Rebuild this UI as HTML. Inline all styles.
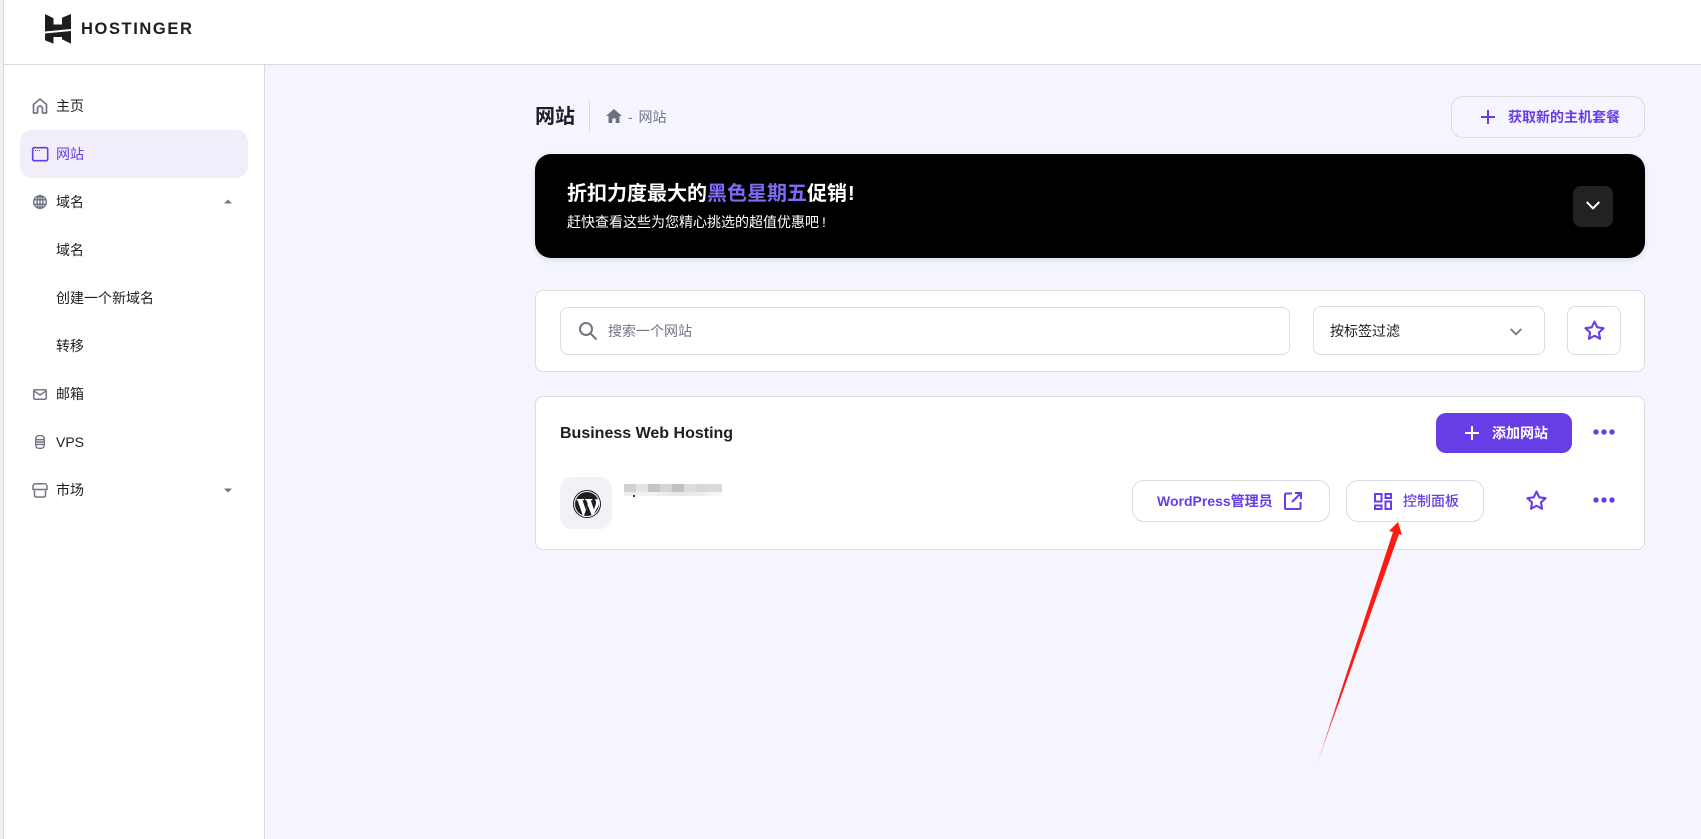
<!DOCTYPE html>
<html lang="zh"><head><meta charset="utf-8"><title>Hostinger</title>
<style>
*{box-sizing:border-box;margin:0;padding:0}
html,body{width:1701px;height:839px;overflow:hidden;background:#f4f5ff;font-family:"Liberation Sans","Noto Sans CJK SC",sans-serif;color:#1d1e20}
.a{position:absolute}
.t{position:absolute;white-space:nowrap;font-size:14px;line-height:20px}
.strip{left:0;top:0;width:4px;height:839px;background:#f1f1f1;border-right:1px solid #dcdcdc}
.head{left:4px;top:0;width:1697px;height:65px;background:#fff;border-bottom:1px solid #d8dae0}
.side{left:4px;top:65px;width:261px;height:774px;background:#fff;border-right:1px solid #d8dae0}
.active{left:20px;top:130px;width:228px;height:48px;border-radius:12px;background:#f1edfb}
.box{position:absolute;background:#fff;border:1px solid #dadce0}
.btn{position:absolute;border:1px solid #dadce0;border-radius:12px}
.p{color:#673de6;font-weight:700}
svg{position:absolute;overflow:visible}
</style></head><body>
<div class="a strip"></div><div class="a head"></div><div class="a side"></div><div class="a active"></div>

<svg style="left:0;top:0" width="100" height="60" fill="#1d1e20">
<polygon points="45,14 53.5,18.3 53.5,24.5 62,24.5 62,17.8 71,14 71,29 45,31.5"/>
<polygon points="45,33.5 71,31 71,43.7 62,39.3 62,37 53.5,37 53.5,43.7 45,40.300"/>
</svg>
<div class="t" style="left:81px;top:18px;font-size:16.5px;line-height:22px;font-weight:700;letter-spacing:1.6px;color:#1d1e20">HOSTINGER</div>

<svg style="left:32px;top:98px" width="16" height="16" fill="none" stroke="#727586" stroke-width="1.700" stroke-linejoin="round"><path d="M1.500 15V6.500L8 1l6.500 5.500V15h-4v-4.500a2.500 2.500 0 0 0-5 0V15z"/></svg>
<svg style="left:32px;top:147px" width="16" height="15" fill="none" stroke="#673de6" stroke-width="1.600"><rect x=".7" y=".7" width="15" height="13" rx="1.500"/><path d="M3 3.500h1M5 3.500h1M7 3.500h1" stroke-width="1"/></svg>
<svg style="left:33px;top:195px" width="14" height="14" fill="none" stroke="#727586" stroke-width="1.500"><circle cx="7" cy="7" r="6.300"/><ellipse cx="7" cy="7" rx="3" ry="6.300"/><path d="M.7 4.700h12.600M.7 9.300h12.600M7 .7v12.600"/></svg>
<svg style="left:33px;top:389px" width="14" height="11" fill="none" stroke="#727586" stroke-width="1.500"><rect x=".7" y=".7" width="12.600" height="9.600" rx="1.300"/><path d="M1 2l6 4 6-4"/></svg>
<svg style="left:35px;top:435px" width="10" height="14" fill="none" stroke="#727586" stroke-width="1.400"><rect x=".7" y=".7" width="8.600" height="12.600" rx="3"/><path d="M.7 4.700h8.600M.7 7h8.600M.7 9.400h8.600"/></svg>
<svg style="left:32px;top:483px" width="16" height="15" fill="none" stroke="#727586" stroke-width="1.500"><path d="M2.500 7.500V12.500a1.500 1.500 0 0 0 1.500 1.500h8a1.500 1.500 0 0 0 1.500-1.500V7.500"/><path d="M3.500 .8h9a2.500 2.500 0 0 1 2.500 2.500V6.500H1V3.300A2.500 2.500 0 0 1 3.500 .8z"/></svg>

<div class="t" style="left:56px;top:96px">主页</div>
<div class="t" style="left:56px;top:144px;color:#673de6">网站</div>
<div class="t" style="left:56px;top:192px">域名</div>
<div class="t" style="left:56px;top:240px">域名</div>
<div class="t" style="left:56px;top:288px">创建一个新域名</div>
<div class="t" style="left:56px;top:336px">转移</div>
<div class="t" style="left:56px;top:384px">邮箱</div>
<div class="t" style="left:56px;top:432px">VPS</div>
<div class="t" style="left:56px;top:480px">市场</div>
<svg style="left:224px;top:199px" width="8" height="5" fill="#727586"><path d="M0 4.500L4 .5l4 4z"/></svg>
<svg style="left:224px;top:488px" width="8" height="5" fill="#727586"><path d="M0 .5h8l-4 4z"/></svg>

<div class="t" style="left:535px;top:103px;font-size:20px;line-height:28px;font-weight:700">网站</div>
<div class="a" style="left:589px;top:101px;width:1px;height:32px;background:#d8dae0"></div>
<svg style="left:606px;top:109px" width="16" height="14" fill="#6d7081"><path d="M8 0L0 7h2.500v7h3.800V9.500h3.400V14h3.800V7H16z"/></svg>
<div class="t" style="left:628px;top:107px;color:#727586;word-spacing:2px">- 网站</div>

<div class="btn" style="left:1451px;top:96px;width:194px;height:42px"></div>
<svg style="left:1481px;top:110px" width="14" height="14" stroke="#673de6" stroke-width="2"><path d="M7 0v14M0 7h14"/></svg>
<div class="t p" style="left:1508px;top:107px">获取新的主机套餐</div>

<div class="a" style="left:535px;top:154px;width:1110px;height:104px;background:#000;border-radius:16px;box-shadow:0 2px 6px rgba(30,30,80,.12)"></div>
<div class="t" style="left:567px;top:180px;font-size:20px;line-height:28px;font-weight:700;color:#fff">折扣力度最大的<span style="color:#7c6cf5">黑色星期五</span>促销<span style="margin-left:1px">!</span></div>
<div class="t" style="left:567px;top:212px;color:#fff">赶快查看这些为您精心挑选的超值优惠吧<span style="margin-left:3px">!</span></div>
<div class="a" style="left:1573px;top:186px;width:40px;height:41px;border-radius:8px;background:#212224"></div>
<svg style="left:1586px;top:201px" width="14" height="9" fill="none" stroke="#fff" stroke-width="2"><path d="M.7 1l6.300 6.300L13.300 1"/></svg>

<div class="box" style="left:535px;top:290px;width:1110px;height:82px;border-radius:8px"></div>
<div class="box" style="left:560px;top:307px;width:730px;height:48px;border-radius:8px"></div>
<svg style="left:579px;top:322px" width="18" height="18" fill="none" stroke="#727586" stroke-width="2"><circle cx="7" cy="7" r="6"/><path d="M11.500 11.500L17.500 17.500"/></svg>
<div class="t" style="left:608px;top:321px;color:#727586">搜索一个网站</div>
<div class="box" style="left:1313px;top:306px;width:232px;height:49px;border-radius:8px"></div>
<div class="t" style="left:1330px;top:321px">按标签过滤</div>
<svg style="left:1510px;top:328px" width="12" height="8" fill="none" stroke="#727586" stroke-width="1.800"><path d="M.7 1l5.300 5.300L11.300 1"/></svg>
<div class="box" style="left:1567px;top:306px;width:54px;height:49px;border-radius:8px"></div>
<svg style="left:1583.500px;top:319.500px" width="21" height="21" viewBox="0 0 20 20" fill="none" stroke="#673de6" stroke-width="2" stroke-linejoin="round"><path d="M10 1.500l2.600 5.500 6 .8-4.400 4.100 1.100 6L10 15l-5.300 2.900 1.100-6L1.400 7.800l6-.8z"/></svg>

<div class="box" style="left:535px;top:396px;width:1110px;height:154px;border-radius:8px"></div>
<div class="t" style="left:560px;top:423px;font-size:16px;line-height:22px;font-weight:700">Business Web Hosting</div>
<div class="a" style="left:1436px;top:413px;width:136px;height:40px;border-radius:10px;background:#673de6"></div>
<svg style="left:1465px;top:426px" width="14" height="14" stroke="#fff" stroke-width="2"><path d="M7 0v14M0 7h14"/></svg>
<div class="t" style="left:1492px;top:423px;color:#fff;font-weight:700">添加网站</div>
<svg style="left:1593px;top:429px" width="22" height="6" fill="#673de6"><circle cx="3" cy="3" r="2.700"/><circle cx="11" cy="3" r="2.700"/><circle cx="19" cy="3" r="2.700"/></svg>

<div class="a" style="left:560px;top:477px;width:52px;height:52px;border-radius:12px;background:#f1f2f6"></div>
<svg style="left:573px;top:490px" width="28" height="28" viewBox="0 0 28 28"><circle cx="14" cy="14" r="13.500" fill="#fff" stroke="#1d1e20" stroke-width="1"/><circle cx="14" cy="14" r="12" fill="#1d1e20"/><path d="M3.500 9h7.500v1.200l-1.500.2 3.300 9.500 2-5.800-1.300-3.700-1.200-.2V9h7v1.200l-1.500.2 3.200 9.300 1.800-5.700c.7-2.200-.2-3.300-1-4.800h3.300c.9 2 1.200 3.800.3 6.500L20 25.500h-1.200L14.700 15l-3.700 10.500H9.800L4.600 10.400 3.500 10.200z" fill="#fff"/></svg>

<div class="a" style="left:624px;top:484px;width:12px;height:8px;background:#d3d2d0"></div>
<div class="a" style="left:636px;top:484px;width:12px;height:8px;background:#e2e3e5"></div>
<div class="a" style="left:648px;top:484px;width:12px;height:8px;background:#c6c5c4"></div>
<div class="a" style="left:660px;top:484px;width:12px;height:8px;background:#d4d5d5"></div>
<div class="a" style="left:672px;top:484px;width:12px;height:8px;background:#c2c1c1"></div>
<div class="a" style="left:684px;top:484px;width:12px;height:8px;background:#dcdde0"></div>
<div class="a" style="left:696px;top:484px;width:12px;height:8px;background:#d9d6d6"></div>
<div class="a" style="left:708px;top:484px;width:14px;height:8px;background:#d9dadd"></div>
<div class="a" style="left:624px;top:492px;width:98px;height:4px;background:linear-gradient(90deg,#eceded,#f3f3f3 30%,#e6e6e6 50%,#eee 80%,#fafafa)"></div>
<div class="a" style="left:633px;top:495px;width:2px;height:2px;background:#333"></div>

<div class="btn" style="left:1132px;top:480px;width:198px;height:42px;background:#fff"></div>
<div class="t p" style="left:1157px;top:491px">WordPress管理员</div>
<svg style="left:1284px;top:492px" width="18" height="18" fill="none" stroke="#673de6" stroke-width="2"><path d="M8 1.500H2a1 1 0 0 0-1 1V16a1 1 0 0 0 1 1h13.500a1 1 0 0 0 1-1V10M11 1h6v6M17 1L8 10"/></svg>
<div class="btn" style="left:1346px;top:480px;width:138px;height:42px;background:#fff"></div>
<svg style="left:1374px;top:492.500px" width="18" height="17" fill="none" stroke="#673de6" stroke-width="2"><rect x="1" y="1" width="6.500" height="7.500"/><rect x="1" y="12.500" width="6.500" height="3.500"/><rect x="11.500" y="1" width="5.500" height="4"/><rect x="11.500" y="8.500" width="5.500" height="7.500"/></svg>
<div class="t" style="left:1403px;top:491px;color:#673de6;font-weight:500">控制面板</div>
<svg style="left:1525.500px;top:489.500px" width="21" height="21" viewBox="0 0 20 20" fill="none" stroke="#673de6" stroke-width="2" stroke-linejoin="round"><path d="M10 1.500l2.600 5.500 6 .8-4.400 4.100 1.100 6L10 15l-5.300 2.900 1.100-6L1.400 7.800l6-.8z"/></svg>
<svg style="left:1593px;top:497px" width="22" height="6" fill="#673de6"><circle cx="3" cy="3" r="2.700"/><circle cx="11" cy="3" r="2.700"/><circle cx="19" cy="3" r="2.700"/></svg>

<svg style="left:0;top:0" width="1701" height="839"><defs><linearGradient id="g" x1="1316" y1="767" x2="1340" y2="700" gradientUnits="userSpaceOnUse"><stop offset="0" stop-color="#ff1a10" stop-opacity=".15"/><stop offset="1" stop-color="#ff1a10"/></linearGradient></defs><path d="M1316 767L1393 532 1389 531 1398 522 1402 535 1399 534z" fill="url(#g)"/></svg>
</body></html>
